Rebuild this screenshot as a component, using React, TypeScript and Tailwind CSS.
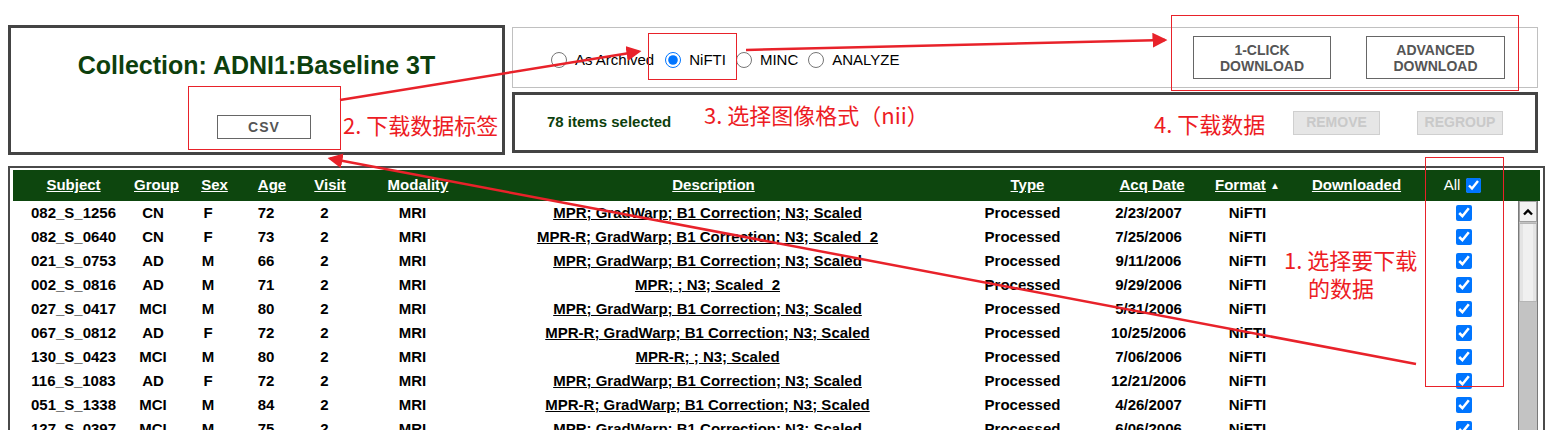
const rows = [
  ["082_S_1256", "CN", "F", "72", "MPR; GradWarp; B1 Correction; N3; Scaled", "2/23/2007"],
  ["082_S_0640", "CN", "F", "73", "MPR-R; GradWarp; B1 Correction; N3; Scaled_2", "7/25/2006"],
  ["021_S_0753", "AD", "M", "66", "MPR; GradWarp; B1 Correction; N3; Scaled", "9/11/2006"],
  ["002_S_0816", "AD", "M", "71", "MPR; ; N3; Scaled_2", "9/29/2006"],
  ["027_S_0417", "MCI", "M", "80", "MPR; GradWarp; B1 Correction; N3; Scaled", "5/31/2006"],
  ["067_S_0812", "AD", "F", "72", "MPR-R; GradWarp; B1 Correction; N3; Scaled", "10/25/2006"],
  ["130_S_0423", "MCI", "M", "80", "MPR-R; ; N3; Scaled", "7/06/2006"],
  ["116_S_1083", "AD", "F", "72", "MPR; GradWarp; B1 Correction; N3; Scaled", "12/21/2006"],
  ["051_S_1338", "MCI", "M", "84", "MPR-R; GradWarp; B1 Correction; N3; Scaled", "4/26/2007"],
  ["127_S_0397", "MCI", "M", "75", "MPR; GradWarp; B1 Correction; N3; Scaled", "6/06/2006"],
];

const headers = ["Subject", "Group", "Sex", "Age", "Visit", "Modality", "Description", "Type", "Acq Date"];

function Radio({ label, checked = false, gap }: { label: string; checked?: boolean; gap: string }) {
  return (
    <label className={`flex items-center ${gap}`}>
      <input type="radio" name="fmt" defaultChecked={checked} className="m-0 w-4 h-4 accent-[#0075ff]" />
      <span className="ml-[8px] text-[15px] text-black">{label}</span>
    </label>
  );
}

function Annotations() {
  const red = "#e8222a";
  return (
    <div className="absolute inset-0 pointer-events-none">
      <svg width="1555" height="430" className="absolute left-0 top-0">
        <defs>
          <marker id="head" markerWidth="6" markerHeight="6" refX="5" refY="3" orient="auto" markerUnits="strokeWidth">
            <path d="M0,0 L6,3 L0,6 Z" fill={red} />
          </marker>
        </defs>
        <line x1="1416" y1="364" x2="330" y2="158.5" stroke={red} strokeWidth="2.5" markerEnd="url(#head)" />
        <line x1="340" y1="100" x2="639" y2="51.5" stroke={red} strokeWidth="2.5" markerEnd="url(#head)" />
        <line x1="746" y1="50" x2="1165" y2="40" stroke={red} strokeWidth="2.5" markerEnd="url(#head)" />
      </svg>
      <div className="absolute left-[188px] top-[86px] w-[153px] h-[64px] border border-[#e8222a]" />
      <div className="absolute left-[648px] top-[33px] w-[89px] h-[47px] border border-[#e8222a]" />
      <div className="absolute left-[1171px] top-[15px] w-[348px] h-[76px] border border-[#e8222a]" />
      <div className="absolute left-[1425px] top-[157px] w-[79px] h-[230px] border border-[#e8222a]" />
      <div className="absolute font-['Noto_Sans_CJK_SC',sans-serif] text-[22px] leading-[22px] text-[#ed1c24] whitespace-nowrap">
        <div className="absolute left-[343px] top-[113px]">2. 下载数据标签</div>
        <div className="absolute left-[704px] top-[103px]">3. 选择图像格式（nii）</div>
        <div className="absolute left-[1154px] top-[112px]">4. 下载数据</div>
        <div className="absolute left-[1284px] top-[248px]">1. 选择要下载</div>
        <div className="absolute left-[1308px] top-[276px]">的数据</div>
      </div>
    </div>
  );
}

export default function App() {
  return (
    <div className="relative h-[430px] overflow-hidden bg-white font-['Liberation_Sans',Arial,sans-serif]">
      <div className="pt-[25px] pl-2">
        <div className="flex gap-[7px]">
          <div className="w-[497px] h-[130px] border-[3px] border-[#444] flex flex-col">
            <h1 className="mt-[23px] text-center text-[25px] leading-[29px] font-bold text-[#0d3f0d]">
              Collection: ADNI1:Baseline 3T
            </h1>
            <button className="ml-[206px] mt-[35px] w-[94px] h-[24px] border border-[#666] text-[14px] font-bold tracking-[1px] text-[#555]">
              CSV
            </button>
          </div>
          <div className="w-[1026px] mt-[2px] flex flex-col gap-[4px]">
            <div className="h-[61px] border border-[#c0c0c0] flex items-center pl-[38px] pr-[32px]">
              <div className="flex items-center pt-[5px]">
                <Radio label="As Archived" gap="" />
                <Radio label="NiFTI" checked gap="ml-[11px]" />
                <Radio label="MINC" gap="ml-[10px]" />
                <Radio label="ANALYZE" gap="ml-[10px]" />
              </div>
              <div className="ml-auto flex gap-[35px]">
                <button className="w-[138px] h-[43px] border border-[#666] text-[14px] leading-[16px] font-bold text-[#555]">
                  1-CLICK
                  <br />
                  DOWNLOAD
                </button>
                <button className="w-[139px] h-[43px] border border-[#666] text-[14px] leading-[16px] font-bold text-[#555]">
                  ADVANCED
                  <br />
                  DOWNLOAD
                </button>
              </div>
            </div>
            <div className="h-[61px] border-[3px] border-[#444] flex items-center pl-[32px] pr-[32px]">
              <span className="text-[15px] font-bold text-[#0d3f0d]">78 items selected</span>
              <div className="ml-auto flex gap-[37px]">
                <button className="w-[87px] h-[24px] bg-[#e6e6e6] border border-[#cfcfcf] text-[14px] font-bold text-[#c9c9c9]">
                  REMOVE
                </button>
                <button className="w-[86px] h-[24px] bg-[#e6e6e6] border border-[#cfcfcf] text-[14px] font-bold text-[#c9c9c9]">
                  REGROUP
                </button>
              </div>
            </div>
          </div>
        </div>

        <div className="mt-[11px] w-[1537px] border-2 border-[#4a4a4a] pt-[2px] pl-[3px] pr-[3px]">
          <div className="h-[31px] bg-[#0d460e] grid grid-cols-[121px_44px_73px_42px_74px_102px_489px_139px_110px_81px_137px_75px_1fr] items-center text-[15px] font-bold text-white">
            {headers.map((h) => (
              <span key={h} className="text-center underline">
                {h}
              </span>
            ))}
            <span className="text-center">
              <span className="underline">Format</span> <span className="text-[10px] align-[1px]">▲</span>
            </span>
            <span className="text-center underline">Downloaded</span>
            <span className="flex items-center justify-center gap-[6px] font-normal">
              All
              <input type="checkbox" readOnly checked className="m-0 w-[15px] h-[15px] accent-[#0075ff]" />
            </span>
            <span />
          </div>
          <div className="flex">
            <div className="w-[1495px]">
              {rows.map((r) => (
                <div
                  key={r[0]}
                  className="h-[24px] grid grid-cols-[121px_38px_72px_44px_73px_103px_487px_143px_109px_89px_127px_89px] items-center text-[15px] font-bold text-black whitespace-nowrap text-center"
                >
                  <span>{r[0]}</span>
                  <span>{r[1]}</span>
                  <span>{r[2]}</span>
                  <span>{r[3]}</span>
                  <span>2</span>
                  <span>MRI</span>
                  <span className="underline">{r[4]}</span>
                  <span>Processed</span>
                  <span>{r[5]}</span>
                  <span>NiFTI</span>
                  <span />
                  <span className="flex justify-center">
                    <input type="checkbox" readOnly checked className="m-0 w-4 h-4 accent-[#0075ff]" />
                  </span>
                </div>
              ))}
            </div>
            <div className="ml-[10px] w-[20px] h-[240px] flex flex-col border-x border-[#7a7a7a] bg-[#c3c3c3]">
              <div className="h-[21px] bg-[#f2f2f2] border border-[#a0a0a0] flex items-center justify-center">
                <svg width="12" height="10" viewBox="0 0 12 10">
                  <path d="M2 7.5 L6 3.5 L10 7.5" fill="none" stroke="#000" strokeWidth="2.4" />
                </svg>
              </div>
              <div className="mt-[1px] h-[79px] bg-[#e4e4e4] border border-[#b5b5b5] flex justify-center">
                <div className="w-[10px] h-full bg-[#f0f0f0]" />
              </div>
            </div>
          </div>
        </div>
      </div>
      <Annotations />
    </div>
  );
}
